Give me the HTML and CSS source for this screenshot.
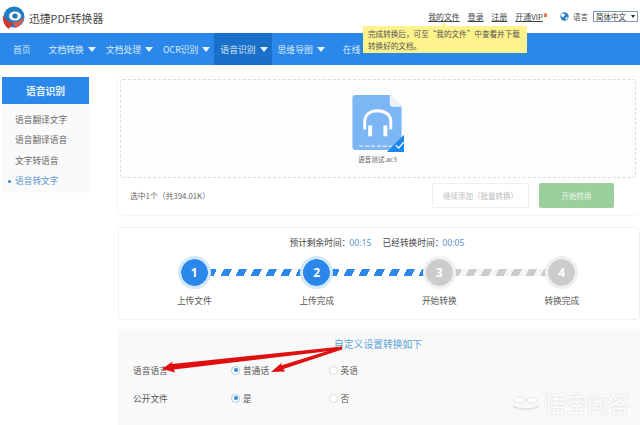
FILE: index.html
```html
<!DOCTYPE html>
<html lang="zh-CN">
<head>
    <meta charset="UTF-8">
    <title>迅捷PDF转换器</title>
    <link rel="stylesheet" href="styles.css">
</head>
<body>
    <div class="page">
        <div class="header">
            <svg class="logo" viewBox="0 0 24 24" width="24" height="24">
                <circle cx="12" cy="11" r="10.5" fill="#1f7fc4"/>
                <ellipse cx="13" cy="10" rx="6" ry="4.6" fill="#fff"/>
                <circle cx="13" cy="10" r="2.6" fill="#1f6fb4"/>
                <path d="M1 9C3 15 9 17 13 17C9 19 8 21 7 23C3 21 0 15 1 9Z" fill="#d8352a"/>
                <path d="M10 16C14 17 19 15 22 11C21 17 17 21 13 22C13 19 12 17 10 16Z" fill="#e8584a"/>
            </svg>
            <span class="brand">迅捷PDF转换器</span>
            <div class="top-links">
                <a class="top-link">我的文件</a>
                <a class="top-link">登录</a>
                <a class="top-link">注册</a>
                <a class="top-link vip">开通VIP<i class="vip-dot"></i></a>
                <svg class="globe" viewBox="0 0 10 10" width="9" height="9">
                    <circle cx="5" cy="5" r="4.6" fill="#2f7fc4"/>
                    <path d="M3 1.5C5 2 6 3 5 4.5C4 5.5 3 5 2.5 6C2 4.5 1 4 1.2 3.2ZM7 5.5C8 5.5 8.6 6 8.4 7C8 8 7 8.6 6.4 8.4C6 7.4 6.2 6 7 5.5Z" fill="#fff"/>
                </svg>
                <span class="lang-label">语言</span>
                <div class="lang-select">简体中文<i class="lang-caret"></i></div>
            </div>
        </div>

        <div class="nav">
            <a class="nav-item first">首页</a>
            <a class="nav-item">文档转换<i class="caret"></i></a>
            <a class="nav-item">文档处理<i class="caret"></i></a>
            <a class="nav-item">OCR识别<i class="caret"></i></a>
            <a class="nav-item active">语音识别<i class="caret"></i></a>
            <a class="nav-item">思维导图<i class="caret"></i></a>
            <a class="nav-item online">在线</a>
        </div>

        <div class="tooltip">完成转换后，可至“我的文件”中查看并下载转换好的文档。</div>

        <div class="content">
            <div class="sidebar">
                <div class="side-title">语音识别</div>
                <ul class="side-list">
                    <li>语音翻译文字</li>
                    <li>语音翻译语音</li>
                    <li>文字转语音</li>
                    <li class="current">语音转文字</li>
                </ul>
            </div>

            <div class="main">
                <div class="upload">
                    <div class="dropzone">
                        <div class="file">
                            <svg class="file-icon" viewBox="0 0 52 60" width="52" height="59">
                                <path d="M3 1H38L50 13V57H3C1.5 57 0 56 0 54V4C0 2 1.500 1 3 1Z" fill="#7cb6f4"/>
                                <path d="M38 1L50 13H41C39 13 38 12 38 10Z" fill="#eef5fd"/>
                                <path d="M12.500 36V28C12.500 21 18 17 25.500 17C33 17 39 21 39 28V36" fill="none" stroke="#fff" stroke-width="3"/>
                                <rect x="16" y="32" width="4" height="11" fill="#fff"/>
                                <rect x="31.500" y="32" width="4" height="11" fill="#fff"/>
                                <path d="M7 53H40" stroke="#fff" stroke-width="1" stroke-dasharray="4 2"/>
                                <path d="M35 59L56 38V56C56 58 55 59 53 59Z" fill="#1b87ea"/>
                                <path d="M44 52L47 55L52 49" fill="none" stroke="#fff" stroke-width="1.300"/>
                            </svg>
                            <div class="file-name">语音测试.ac3</div>
                        </div>
                    </div>
                    <div class="upload-foot">
                        <span class="selected">选中1个（共394.01K）</span>
                        <div class="btn btn-add">继续添加（批量转换）</div>
                        <div class="btn btn-start">开始转换</div>
                    </div>
                </div>

                <div class="progress">
                    <div class="times">
                        <span>预计剩余时间：<b>00:15</b></span>
                        <span>已经转换时间：<b>00:05</b></span>
                    </div>
                    <div class="steps">
                        <div class="step done"><span class="dot">1</span><span class="step-label">上传文件</span></div>
                        <div class="step done"><span class="dot">2</span><span class="step-label">上传完成</span></div>
                        <div class="step todo-next"><span class="dot">3</span><span class="step-label">开始转换</span></div>
                        <div class="step last"><span class="dot">4</span><span class="step-label">转换完成</span></div>
                    </div>
                </div>

                <div class="settings">
                    <div class="settings-title">自定义设置转换如下</div>
                    <div class="row">
                        <span class="row-name">语音语言</span>
                        <span class="opt"><i class="radio on"></i>普通话</span>
                        <span class="opt"><i class="radio"></i>英语</span>
                    </div>
                    <div class="row">
                        <span class="row-name">公开文件</span>
                        <span class="opt"><i class="radio on"></i>是</span>
                        <span class="opt"><i class="radio"></i>否</span>
                    </div>
                </div>
            </div>
        </div>

        <svg class="arrows" viewBox="0 0 640 425" width="640" height="425">
            <path d="M342 346.500L172 364L172.500 361.500L162 369L175 372.500L174 369.500L342 349.500Z" fill="#e01010"/>
            <path d="M342 346.500L281 365.500L282 362.500L271 372L285 371.500L283.500 369L342 349.500Z" fill="#e01010"/>
        </svg>

        <div class="watermark">
            <svg viewBox="0 0 30 16" width="30" height="16">
                <ellipse cx="8" cy="5" rx="5" ry="3" fill="#fff" stroke="#e4e4e4"/>
                <ellipse cx="21" cy="5" rx="5" ry="3" fill="#fff" stroke="#e4e4e4"/>
                <path d="M2 11C8 15 22 15 28 11" fill="none" stroke="#e4e4e4" stroke-width="2"/>
            </svg>
            <span>悟空问答</span>
        </div>
    </div>
</body>
</html>
```
FILE: styles.css
```css
* {
    box-sizing: border-box;
}
body {
    margin: 0;
    background: #fff;
    font-family: "Noto Sans CJK SC", "Noto Sans", sans-serif;
    font-size: 8.7px;
    color: #555;
}
.page {
    position: relative;
    width: 640px;
    height: 425px;
    overflow: hidden;
}

/* 顶部 */
.header {
    display: flex;
    align-items: center;
    height: 33px;
    padding: 2px 2px 0 2px;
}
.logo {
    flex: none;
}
.brand {
    margin-left: 3px;
    font-size: 10.800px;
    color: #444;
}
.top-links {
    display: flex;
    align-items: center;
    margin-left: auto;
    height: 100%;
    padding-bottom: 2px;
}
.top-link {
    margin-right: 8px;
    font-size: 7.900px;
    color: #444;
    text-decoration: underline;
}
.vip {
    position: relative;
    margin-right: 17px;
}
.vip-dot {
    position: absolute;
    top: 2px;
    right: -4px;
    width: 3px;
    height: 4px;
    background: #e8703a;
    border-radius: 2px 2px 0 0;
}
.globe {
    flex: none;
}
.lang-label {
    margin: 0 5px 0 4px;
    font-size: 7.500px;
    color: #444;
}
.lang-select {
    display: flex;
    align-items: center;
    justify-content: space-between;
    width: 45px;
    height: 11px;
    padding: 0 2px;
    border: 1px solid #7f9db9;
    font-size: 7.500px;
    color: #333;
}
.lang-caret {
    width: 0;
    height: 0;
    border-left: 2px solid transparent;
    border-right: 2px solid transparent;
    border-top: 3px solid #222;
}

/* 导航 */
.nav {
    display: flex;
    height: 32px;
    padding-left: 7px;
    background: #2b88ea;
}
.nav-item {
    display: flex;
    align-items: center;
    padding: 0 4px 0 6px;
    color: #d8eafc;
    font-size: 8.800px;
}
.nav-item.first {
    margin-right: 8px;
}
.nav-item.active {
    background: #1a6fc8;
}
.nav-item.online {
    margin-left: 8px;
}
.caret {
    width: 0;
    height: 0;
    margin-left: 4px;
    border-left: 4.500px solid transparent;
    border-right: 4.500px solid transparent;
    border-top: 5px solid #e8f2fd;
}

.tooltip {
    position: absolute;
    left: 363px;
    top: 26px;
    width: 164px;
    height: 27px;
    padding: 2px 5px;
    background: #fdf28c;
    color: #555;
    font-size: 7.600px;
    line-height: 11.500px;
}
.tooltip::before {
    content: "";
    position: absolute;
    left: 78px;
    top: -3px;
    border-left: 3px solid transparent;
    border-right: 3px solid transparent;
    border-bottom: 3px solid #fdf28c;
}

.content {
    display: flex;
    padding: 12px 0 0 2px;
}

/* 左侧 */
.sidebar {
    flex: none;
    width: 87px;
    height: 116px;
    background: #fafafa;
}
.side-title {
    height: 27px;
    line-height: 28px;
    background: #2b88ea;
    color: #e8f3fe;
    font-size: 9.800px;
    font-weight: bold;
    text-align: center;
}
.side-list {
    margin: 6px 0 0;
    padding: 0 0 0 13px;
    list-style: none;
}
.side-list li {
    height: 20.300px;
    line-height: 20.300px;
    color: #666;
}
.side-list li.current {
    position: relative;
    color: #5b94d0;
}
.side-list li.current::before {
    content: "";
    position: absolute;
    left: -7px;
    top: 9px;
    width: 3px;
    height: 3px;
    border-radius: 50%;
    background: #3b86d8;
}

/* 右侧 */
.main {
    flex: none;
    width: 522px;
    margin-left: 29px;
}
.upload {
    height: 138px;
    padding: 2px 4px 0 2px;
    border-radius: 4px;
    box-shadow: 0 0 3px rgba(0,0,0,0.08);
}
.dropzone {
    display: flex;
    justify-content: center;
    height: 99px;
    padding-top: 14px;
    padding-right: 2px;
    border: 1px dashed #ddd;
    border-radius: 3px;
    background: #fdfdfd;
}
.file {
    width: 60px;
    text-align: center;
    margin-right: -1px;
}
.file-icon {
    display: block;
    margin: 0 0 0 4px;
}
.file-name {
    margin-top: 1px;
    font-size: 6.600px;
    color: #666;
    white-space: nowrap;
}
.upload-foot {
    display: flex;
    align-items: center;
    height: 35px;
    padding: 0 22px 0 10px;
}
.selected {
    margin-right: auto;
    font-size: 7.800px;
    color: #666;
}
.btn {
    height: 25px;
    line-height: 25px;
    text-align: center;
    border-radius: 2px;
    font-size: 7.500px;
}
.btn-add {
    width: 97px;
    margin-right: 10px;
    border: 1px solid #eee;
    line-height: 23px;
    background: #fff;
    color: #bbb;
}
.btn-start {
    width: 75px;
    background: #9bd09c;
    color: #e8f6e8;
}

.progress {
    height: 93px;
    margin-top: 12px;
    padding-top: 9px;
    border: 1px dotted #e2e2e2;
    border-radius: 5px;
}
.times {
    display: flex;
    gap: 11px;
    justify-content: center;
    padding-right: 4px;
    line-height: 12px;
    color: #444;
}
.times b {
    font-weight: normal;
    color: #5b94d0;
    font-family: "Noto Sans", sans-serif;
    margin-left: -1px;
}
.steps {
    display: flex;
    margin: 7px 0 0 14px;
}
.step {
    position: relative;
    z-index: 1;
    display: flex;
    flex-direction: column;
    align-items: center;
    flex: none;
    width: 122.500px;
}
.step::after {
    content: "";
    position: absolute;
    z-index: -1;
    left: 50%;
    top: 13px;
    width: 100%;
    height: 7px;
    background: repeating-linear-gradient(115deg, #2b88ea 0 7px, #fff 7px 13.600px);
}
.todo-next::after {
    background: repeating-linear-gradient(115deg, #ccc 0 7px, #f5f5f5 7px 13.600px);
}
.last::after {
    display: none;
}
.dot {
    display: flex;
    align-items: center;
    justify-content: center;
    width: 33px;
    height: 33px;
    border: 3px solid #d3e8fb;
    border-radius: 50%;
    background: #2b88ea;
    background-clip: padding-box;
    color: #fff;
    font-family: "Noto Sans", sans-serif;
    font-size: 12px;
    font-weight: bold;
}
.todo-next .dot, .last .dot {
    border-color: #f0f0f0;
    background: #ccc;
    background-clip: padding-box;
}
.step-label {
    margin-top: 6px;
    line-height: 12px;
    color: #555;
}

.settings {
    height: 96px;
    margin: 9px 0 0 -1px;
    padding: 9px 0 0 16px;
    background: #f9f9f9;
}
.settings-title {
    line-height: 13px;
    padding-left: 201px;
    color: #5aa4d8;
    font-size: 9.800px;
}
.row {
    display: flex;
    align-items: center;
    height: 28px;
    color: #555;
}
.row:nth-child(2) {
    margin-top: 5px;
}
.row-name {
    width: 98px;
}
.opt {
    display: flex;
    align-items: center;
    width: 97.500px;
}
.radio {
    position: relative;
    width: 9px;
    height: 9px;
    margin-right: 3px;
    border: 1px solid #ddd;
    border-radius: 50%;
    background: #fff;
}
.radio.on {
    border-color: #a9c9ea;
}
.radio.on::after {
    content: "";
    position: absolute;
    left: 1.500px;
    top: 1.500px;
    width: 4px;
    height: 4px;
    border-radius: 50%;
    background: #3b86c8;
}

/* 箭头和水印 */
.arrows {
    position: absolute;
    left: 0;
    top: 0;
}
.watermark {
    position: absolute;
    left: 511px;
    top: 390px;
    display: flex;
    align-items: center;
    gap: 3px;
    color: #fff;
    font-size: 21.500px;
    line-height: 25px;
    text-shadow: 0 0 2px #ccc;
}
```
